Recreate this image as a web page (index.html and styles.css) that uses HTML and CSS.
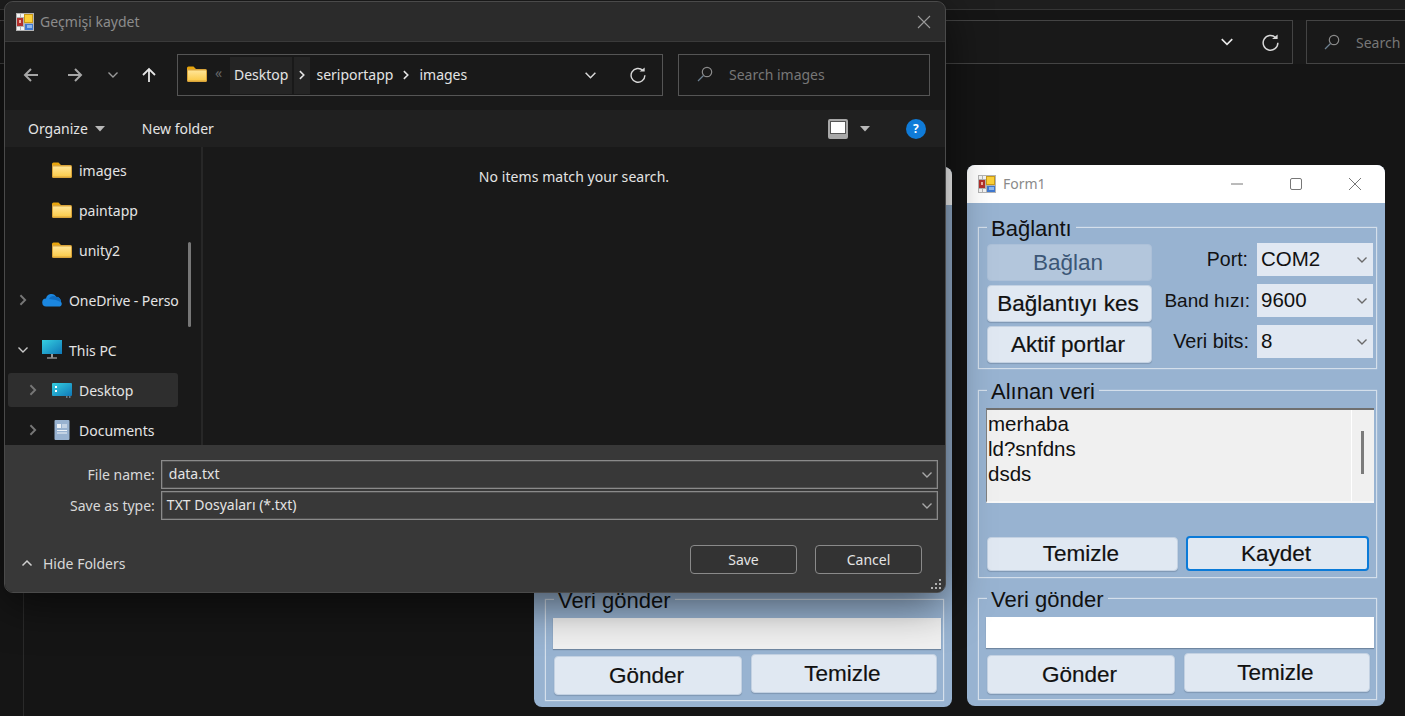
FILE: index.html
```html
<!DOCTYPE html>
<html lang="en">
<head>
    <meta charset="UTF-8">
    <title>Geçmişi kaydet</title>
    <link rel="stylesheet" href="styles.css">
</head>
<body>
    <svg class="defs" width="0" height="0">
        <symbol id="appicon" viewBox="0 0 18 18">
            <rect width="18" height="18" fill="#b4b4b4"/>
            <rect x="1" y="1" width="3" height="3" fill="#f4f4f4"/>
            <rect x="5" y="1" width="3" height="3" fill="#f4f4f4"/>
            <rect x="1" y="14" width="3" height="3" fill="#f4f4f4"/>
            <rect x="5" y="14" width="3" height="3" fill="#f4f4f4"/>
            <rect x="1" y="5" width="6" height="8" fill="#b3302c"/>
            <rect x="3" y="7" width="2" height="3" fill="#f0b0a0"/>
            <rect x="8" y="1" width="9" height="9" fill="#c99a18"/>
            <rect x="9" y="2" width="7" height="7" fill="#fbd038"/>
            <rect x="9" y="11" width="8" height="6" fill="#3f78d0"/>
            <rect x="11" y="12" width="5" height="3" fill="#8fb8ee"/>
        </symbol>
        <symbol id="folder" viewBox="0 0 20 16">
            <path d="M0 2a1.500 1.500 0 0 1 1.500-1.500h5l2.500 2.500h-9z" fill="#e8a50c"/>
            <path d="M0 3h18.500a1.500 1.500 0 0 1 1.500 1.500v10a1.500 1.500 0 0 1-1.500 1.500h-17a1.500 1.500 0 0 1-1.500-1.500z" fill="#d9a43a"/>
            <path d="M1 4.500h18v10h-18z" fill="url(#foldergrad)"/>
        </symbol>
        <linearGradient id="foldergrad" x1="0" y1="0" x2="0" y2="1">
            <stop offset="0" stop-color="#ffe596"/>
            <stop offset="1" stop-color="#fbcb4c"/>
        </linearGradient>
        <linearGradient id="screengrad" x1="0" y1="0" x2="1" y2="1">
            <stop offset="0" stop-color="#35cfe0"/>
            <stop offset="1" stop-color="#0f78b8"/>
        </linearGradient>
        <symbol id="chev" viewBox="0 0 12 12">
            <path d="M1.500 3.500l4.500 4.500 4.500-4.500" fill="none" stroke="currentColor" stroke-width="1.400"/>
        </symbol>
        <symbol id="chevright" viewBox="0 0 10 14">
            <path d="M2 1.500l5.500 5.500-5.500 5.500" fill="none" stroke="currentColor" stroke-width="2.200"/>
        </symbol>
        <symbol id="caret" viewBox="0 0 10 6">
            <path d="M0 0h10l-5 5.500z" fill="currentColor"/>
        </symbol>
        <symbol id="search" viewBox="0 0 16 16">
            <circle cx="10" cy="6" r="4.700" fill="none" stroke="#8a8a8a" stroke-width="1.200"/>
            <path d="M6.500 9.500l-5.500 5.500" stroke="#6c7f90" stroke-width="1.300"/>
        </symbol>
        <symbol id="refresh" viewBox="0 0 16 16">
            <path d="M12.900 3.500a6.900 6.900 0 1 0 2 4.800" fill="none" stroke="#d8d8d8" stroke-width="1.400"/>
            <path d="M9.500 4.600h5.200v-4.200z" fill="#d8d8d8"/>
        </symbol>
    </svg>

    <!-- app behind everything -->
    <div class="backdrop">
        <div class="back-strip"></div>
        <div class="back-bar">
            <div class="back-address">
                <svg class="back-chev"><use href="#chev"/></svg>
                <svg class="back-refresh"><use href="#refresh"/></svg>
            </div>
            <div class="back-search">
                <svg class="search-icon"><use href="#search"/></svg>
                <span>Search</span>
            </div>
        </div>
        <div class="back-rail"></div>
    </div>

    <!-- form hidden behind the dialog -->
    <div class="form-window form-behind">
        <div class="form-title"></div>
        <div class="form-body">
            <div class="group group-send">
                <div class="group-title">Veri gönder</div>
                <div class="send-input"></div>
                <div class="send-row">
                    <button class="btn btn-send">Gönder</button>
                    <button class="btn btn-clear">Temizle</button>
                </div>
            </div>
        </div>
    </div>

    <div class="form-window form-front">
        <div class="form-title">
            <svg class="form-icon"><use href="#appicon"/></svg>
            <span class="form-name">Form1</span>
            <div class="form-controls">
                <svg width="14" height="14" viewBox="0 0 14 14"><path d="M1 7h12" stroke="#777" stroke-width="1"/></svg>
                <svg width="14" height="14" viewBox="0 0 14 14"><rect x="1.500" y="1.500" width="11" height="11" rx="1.500" fill="none" stroke="#777"/></svg>
                <svg width="14" height="14" viewBox="0 0 14 14"><path d="M1 1l12 12M13 1l-12 12" stroke="#777" stroke-width="1"/></svg>
            </div>
        </div>
        <div class="form-body">
            <div class="group group-conn">
                <div class="group-title">Bağlantı</div>
                <div class="conn-buttons">
                    <button class="btn btn-conn btn-disabled">Bağlan</button>
                    <button class="btn btn-conn">Bağlantıyı kes</button>
                    <button class="btn btn-conn">Aktif portlar</button>
                </div>
                <div class="conn-fields">
                    <div class="field field-port">
                        <span class="field-label">Port:</span>
                        <div class="combo">COM2<svg class="combo-chev"><use href="#chev"/></svg></div>
                    </div>
                    <div class="field field-band">
                        <span class="field-label">Band hızı:</span>
                        <div class="combo">9600<svg class="combo-chev"><use href="#chev"/></svg></div>
                    </div>
                    <div class="field field-bits">
                        <span class="field-label">Veri bits:</span>
                        <div class="combo">8<svg class="combo-chev"><use href="#chev"/></svg></div>
                    </div>
                </div>
            </div>

            <div class="group group-recv">
                <div class="group-title">Alınan veri</div>
                <div class="recv-box">
                    <div class="recv-text">merhaba<br>ld?snfdns<br>dsds</div>
                    <div class="recv-scroll"><div class="recv-thumb"></div></div>
                </div>
                <div class="recv-row">
                    <button class="btn btn-recv-clear">Temizle</button>
                    <button class="btn btn-save">Kaydet</button>
                </div>
            </div>

            <div class="group group-send">
                <div class="group-title">Veri gönder</div>
                <div class="send-input"></div>
                <div class="send-row">
                    <button class="btn btn-send">Gönder</button>
                    <button class="btn btn-clear">Temizle</button>
                </div>
            </div>
        </div>
    </div>

    <div class="dialog">
        <div class="dlg-title">
            <svg class="dlg-icon"><use href="#appicon"/></svg>
            <span class="dlg-name">Geçmişi kaydet</span>
            <svg class="dlg-close" viewBox="0 0 14 14"><path d="M1 1l12 12M13 1l-12 12" stroke="#9a9a9a" stroke-width="1.100"/></svg>
        </div>

        <div class="dlg-nav">
            <div class="nav-buttons">
                <svg class="nav-arrow" viewBox="0 0 16 16"><path d="M15 8h-13M8 2l-6 6 6 6" fill="none" stroke="#a6a6a6" stroke-width="2"/></svg>
                <svg class="nav-arrow nav-forward" viewBox="0 0 16 16"><path d="M1 8h13M8 2l6 6-6 6" fill="none" stroke="#a6a6a6" stroke-width="2"/></svg>
                <svg class="nav-drop"><use href="#chev"/></svg>
                <svg class="nav-arrow nav-up" viewBox="0 0 16 16"><path d="M8 15v-13M2 8l6-6 6 6" fill="none" stroke="#e6e6e6" stroke-width="1.800"/></svg>
            </div>
            <div class="address">
                <svg class="addr-folder"><use href="#folder"/></svg>
                <span class="addr-more">«</span>
                <span class="crumb crumb-hover">Desktop</span>
                <span class="crumb-sep crumb-hover"><svg><use href="#chevright"/></svg></span>
                <span class="crumb crumb-plain">seriportapp</span>
                <span class="crumb-sep"><svg><use href="#chevright"/></svg></span>
                <span class="crumb crumb-plain">images</span>
                <svg class="addr-chev"><use href="#chev"/></svg>
                <svg class="addr-refresh"><use href="#refresh"/></svg>
            </div>
            <div class="search-box">
                <svg class="search-icon"><use href="#search"/></svg>
                <span>Search images</span>
            </div>
        </div>

        <div class="dlg-tools">
            <span class="tool tool-organize">Organize<svg class="tool-caret"><use href="#caret"/></svg></span>
            <span class="tool tool-new">New folder</span>
            <span class="view-icon"></span>
            <svg class="tool-caret view-caret"><use href="#caret"/></svg>
            <span class="help-icon">?</span>
        </div>

        <div class="dlg-body">
            <div class="sidebar">
                <div class="tree-row lvl1"><span class="tree-chev"></span><svg class="tree-icon"><use href="#folder"/></svg><span>images</span></div>
                <div class="tree-row lvl1"><span class="tree-chev"></span><svg class="tree-icon"><use href="#folder"/></svg><span>paintapp</span></div>
                <div class="tree-row lvl1 tree-last"><span class="tree-chev"></span><svg class="tree-icon"><use href="#folder"/></svg><span>unity2</span></div>
                <div class="tree-row lvl0 tree-last">
                    <svg class="tree-chev"><use href="#chevright"/></svg>
                    <svg class="tree-icon" viewBox="0 0 20 16"><path d="M4.500 14.500a4 4 0 0 1-.5-8 5.500 5.500 0 0 1 10.300-1.500 4.500 4.500 0 0 1 4.700 5 2.800 2.800 0 0 1-1 4.500z" fill="#1b87e0"/><path d="M7 7a5 5 0 0 1 7-2.200 4.500 4.500 0 0 1 4.800 5.200l-5-2z" fill="#0f6cc0"/></svg>
                    <span class="tree-long">OneDrive - Perso</span>
                </div>
                <div class="tree-row lvl0">
                    <svg class="tree-chev tree-open"><use href="#chev"/></svg>
                    <svg class="tree-icon tree-icon-tall" viewBox="0 0 20 20"><rect x="0" y="0" width="20" height="14" fill="url(#screengrad)"/><path d="M9 14h2v3.500h-2z" fill="#9a9a9a"/><path d="M5 17.500h10v1h-10z" fill="#c8c8c8"/></svg>
                    <span>This PC</span>
                </div>
                <div class="tree-row lvl1 tree-selected">
                    <svg class="tree-chev"><use href="#chevright"/></svg>
                    <svg class="tree-icon" viewBox="0 0 20 16"><rect y="1" width="20" height="13" rx="1" fill="url(#screengrad)"/><rect x="3" y="4" width="2" height="2" fill="#fff"/><rect x="3" y="8" width="2" height="2" fill="#fff"/><rect x="14" y="14.500" width="1.500" height="1" fill="#a8c8e0"/><rect x="17" y="14.500" width="1.500" height="1" fill="#a8c8e0"/></svg>
                    <span>Desktop</span>
                </div>
                <div class="tree-row lvl1">
                    <svg class="tree-chev"><use href="#chevright"/></svg>
                    <svg class="tree-icon tree-icon-tall" viewBox="0 0 20 20"><rect x="2.500" y="0" width="15" height="20" rx="1" fill="#98b2d0"/><rect x="5" y="4" width="4" height="4" fill="#eef3f8"/><path d="M10 5h5M10 7h5M5 10.500h10M5 13h10" stroke="#eef3f8" stroke-width="1"/></svg>
                    <span>Documents</span>
                </div>
                <div class="side-thumb"></div>
            </div>
            <div class="main-list">No items match your search.</div>
        </div>

        <div class="dlg-footer">
            <div class="file-row">
                <label class="file-label">File name:</label>
                <div class="file-box file-name">data.txt<svg class="file-chev"><use href="#chev"/></svg></div>
            </div>
            <div class="file-row">
                <label class="file-label">Save as type:</label>
                <div class="file-box file-type">TXT Dosyaları (*.txt)<svg class="file-chev"><use href="#chev"/></svg></div>
            </div>
            <div class="footer-actions">
                <svg class="hide-chev" viewBox="0 0 12 12"><path d="M1.500 8.500l4.500-4.500 4.500 4.500" fill="none" stroke="#d0d0d0" stroke-width="1.500"/></svg>
                <span class="hide-folders">Hide Folders</span>
                <button class="dlg-btn dlg-save">Save</button>
                <button class="dlg-btn">Cancel</button>
            </div>
            <svg class="grip" width="11" height="11" viewBox="0 0 11 11"><path d="M8 0h2v2h-2zM4 4h2v2h-2zM8 4h2v2h-2zM0 8h2v2h-2zM4 8h2v2h-2zM8 8h2v2h-2z" fill="#b0b0b0"/></svg>
        </div>
    </div>
</body>
</html>
```

FILE: styles.css
```css
* {
    box-sizing: border-box;
}
html, body {
    margin: 0;
    padding: 0;
}
body {
    position: relative;
    width: 1405px;
    height: 716px;
    overflow: hidden;
    background-color: #151515;
    font-family: "Noto Sans", sans-serif;
    font-size: 14px;
    color: #e4e4e4;
}
button {
    font-family: inherit;
    cursor: default;
}
.defs {
    position: absolute;
}

/* background app */
.backdrop {
    position: absolute;
    inset: 0;
}
.back-strip {
    height: 10px;
    background-color: #1e1e1e;
    border-bottom: 1px solid #363636;
}
.back-bar {
    display: flex;
    margin-top: 10px;
    height: 44px;
    background-color: #191919;
}
.back-address {
    display: flex;
    align-items: center;
    justify-content: flex-end;
    width: 1295px;
    margin-left: -2px;
    border: 1px solid #444;
    padding-right: 13px;
}
.back-chev {
    width: 14px;
    height: 14px;
    color: #e8e8e8;
    margin-right: 28px;
}
.back-refresh {
    width: 17px;
    height: 17px;
}
.back-search {
    display: flex;
    align-items: center;
    flex: 1;
    margin-left: 13px;
    margin-right: -10px;
    padding-left: 17px;
    border: 1px solid #444;
    color: #777;
}
.back-rail {
    position: absolute;
    left: 23px;
    top: 590px;
    bottom: 0;
    width: 1px;
    background-color: #2a2a2a;
}

/* winforms windows */
.form-window {
    position: absolute;
    width: 418px;
    border-radius: 8px;
    overflow: hidden;
    display: flex;
    flex-direction: column;
    font-family: "Liberation Sans", Arial, sans-serif;
    font-size: 20.500px;
    color: #111;
    background-color: #98b3d1;
}
.form-front {
    left: 967px;
    top: 165px;
    height: 541px;
}
.form-behind {
    left: 534px;
    top: 167px;
    height: 540px;
}
.form-behind .form-body {
    justify-content: flex-end;
}
.form-behind .send-input {
    background-color: #f0f0f0;
}
.form-title {
    display: flex;
    align-items: center;
    height: 38px;
    flex: none;
    padding-left: 11px;
    background-color: #fff;
}
.form-icon {
    width: 18px;
    height: 18px;
}
.form-name {
    margin-left: 7px;
    padding-bottom: 2px;
    font-family: "Noto Sans", sans-serif;
    font-size: 14px;
    color: #8a8a8a;
}
.form-controls {
    display: flex;
    gap: 45px;
    margin-left: auto;
    margin-right: 23px;
}
.form-body {
    flex: 1;
    display: flex;
    flex-direction: column;
    padding: 24px 8px 6px 11px;
}
.group {
    position: relative;
    border: 1px solid #d4dfeb;
    box-shadow: 0 0 1px #d4dfeb;
}
.group-title {
    position: absolute;
    left: 8px;
    top: -12px;
    padding: 0 4px;
    font-size: 22px;
    line-height: 26px;
    background-color: #98b3d1;
}
.group-conn {
    display: flex;
    justify-content: space-between;
    height: 142px;
    padding: 16px 3px 0 8px;
}
.group-recv {
    margin-top: 21px;
    height: 188px;
    padding: 17px 2px 0 7px;
}
.group-send {
    margin-top: 20px;
    height: 102px;
    padding: 18px 2px 0 7px;
}
.btn {
    display: block;
    padding: 0 3px 0 0;
    font-size: 22.500px;
    -webkit-text-stroke: 0.2px #111;
    color: #111;
    background-color: #e0e8f2;
    border: 1px solid #c3d1e2;
    border-radius: 4px;
    box-shadow: 0 1px 1px #7f97b3;
}
.conn-buttons {
    display: flex;
    flex-direction: column;
    gap: 4px;
    width: 165px;
}
.btn-conn {
    height: 37px;
}
.btn-disabled {
    background-color: #b3c6dc;
    border-color: #acc0d8;
    color: #3c5676;
    -webkit-text-stroke: 0;
    box-shadow: none;
}
.conn-fields {
    display: flex;
    flex-direction: column;
    gap: 8px;
    margin-top: -1px;
}
.field {
    display: flex;
    align-items: center;
    justify-content: flex-end;
}
.field-label {
    margin-right: 9px;
    font-size: 19.500px;
}
.field-band .field-label {
    margin-right: 7px;
    font-size: 19px;
}
.field-bits .field-label {
    margin-right: 8px;
    font-size: 19.800px;
}
.combo {
    position: relative;
    display: flex;
    align-items: center;
    width: 116px;
    height: 33px;
    padding: 0 0 1px 4px;
    background-color: #e1e8f2;
}
.combo-chev {
    position: absolute;
    right: 5px;
    top: 11px;
    width: 12px;
    height: 12px;
    color: #6a6a6a;
}
.recv-box {
    display: flex;
    width: 388px;
    height: 95px;
    background-color: #f0f0f0;
    border-top: 2px solid #707070;
    border-left: 1px solid #808080;
    border-bottom: 2px solid #f8f8f8;
}
.recv-text {
    flex: 1;
    padding: 1px 0 0 1px;
    line-height: 25px;
}
.recv-scroll {
    width: 23px;
    border-left: 1px solid #fff;
    padding: 21px 0 0 9px;
}
.recv-thumb {
    width: 3px;
    height: 43px;
    background-color: #7b7b7b;
}
.recv-row {
    display: flex;
    margin-top: 33px;
    margin-left: 1px;
}
.btn-recv-clear {
    width: 191px;
    height: 34px;
    margin-top: 1px;
}
.btn-save {
    width: 183px;
    height: 35px;
    margin-left: 8px;
    border: 2px solid #0a7ad8;
    box-shadow: none;
}
.send-input {
    width: 388px;
    height: 31px;
    background-color: #fff;
    box-shadow: 0 1px 1px #6f86a0;
}
.send-row {
    display: flex;
    align-items: flex-start;
    margin-top: 5px;
    margin-left: 1px;
}
.btn-send {
    width: 188px;
    height: 39px;
    margin-top: 2px;
}
.btn-clear {
    width: 186px;
    height: 39px;
    margin-left: 9px;
}

/* save dialog */
.dialog {
    position: absolute;
    left: 5px;
    top: 2px;
    width: 940px;
    height: 590px;
    display: flex;
    flex-direction: column;
    border-radius: 8px;
    overflow: hidden;
    outline: 1px solid #4a4a4a;
    box-shadow: 0 10px 45px rgba(0, 0, 0, 0.6);
    background-color: #191919;
}
.dlg-title {
    display: flex;
    align-items: center;
    flex: none;
    height: 40px;
    padding: 0 14px 0 11px;
    background-color: #2b2b2b;
    border-bottom: 1px solid #3a3a3a;
}
.dlg-icon {
    width: 18px;
    height: 18px;
}
.dlg-name {
    margin-left: 6px;
    color: #8c8c8c;
}
.dlg-close {
    width: 14px;
    height: 14px;
    margin-left: auto;
}
.dlg-nav {
    display: flex;
    align-items: center;
    flex: none;
    height: 68px;
    padding-bottom: 2px;
}
.nav-buttons {
    display: flex;
    align-items: center;
    width: 172px;
    padding-left: 18px;
}
.nav-arrow {
    width: 16px;
    height: 16px;
}
.nav-forward {
    margin-left: 28px;
}
.nav-drop {
    width: 12px;
    height: 12px;
    margin-left: 24px;
    color: #9a9a9a;
}
.nav-up {
    margin-left: 22px;
}
.address {
    display: flex;
    align-items: center;
    width: 486px;
    height: 42px;
    border: 1px solid #555;
    padding-left: 9px;
}
.addr-folder {
    width: 20px;
    height: 16px;
    margin-bottom: 3px;
}
.addr-more {
    width: 23px;
    margin-top: -6px;
    padding-left: 8px;
    color: #666;
}
.crumb {
    display: flex;
    align-items: center;
    height: 37px;
    padding: 0 4px 2px;
}
.crumb-hover {
    background-color: #242424;
}
.crumb-sep {
    display: flex;
    align-items: center;
    justify-content: center;
    width: 16px;
    height: 37px;
    margin: 0 2px;
}
.crumb-sep svg {
    width: 8px;
    height: 10px;
    color: #e4e4e4;
}
.crumb-plain + .crumb-sep {
    margin: 0 1px;
}
.addr-chev {
    width: 13px;
    height: 13px;
    margin-left: auto;
    color: #d8d8d8;
}
.addr-refresh {
    width: 16px;
    height: 16px;
    margin: 0 16px 0 33px;
}
.search-box {
    display: flex;
    align-items: center;
    width: 252px;
    height: 42px;
    margin-left: 15px;
    padding-left: 18px;
    padding-bottom: 2px;
    border: 1px solid #555;
    color: #777;
}
.search-icon {
    width: 16px;
    height: 16px;
    margin-right: 16px;
    flex: none;
}
.dlg-tools {
    display: flex;
    align-items: center;
    flex: none;
    height: 37px;
    padding-left: 23px;
    background-color: #202020;
}
.tool-organize {
    display: flex;
    align-items: center;
}
.tool-caret {
    width: 10px;
    height: 6px;
    margin-left: 7px;
    color: #b8b8b8;
}
.tool-new {
    margin-left: 37px;
}
.view-icon {
    width: 20px;
    height: 20px;
    margin-left: 614px;
    background-color: #fff;
    border: 2px solid #a8a8a8;
    border-bottom-width: 5px;
    border-radius: 2px;
    box-shadow: inset 0 0 0 1px #555;
}
.view-caret {
    margin-left: 12px;
}
.help-icon {
    display: flex;
    align-items: center;
    justify-content: center;
    width: 20px;
    height: 20px;
    margin-left: 36px;
    border-radius: 50%;
    background-color: #0f7bd8;
    color: #fff;
    font-size: 12px;
    font-weight: bold;
}
.dlg-body {
    display: flex;
    flex: 1;
    min-height: 0;
}
.sidebar {
    position: relative;
    width: 198px;
    flex: none;
    overflow: hidden;
    padding: 6px 0 0 3px;
    border-right: 2px solid #272727;
}
.tree-row {
    display: flex;
    align-items: center;
    width: 170px;
    height: 34px;
    margin-bottom: 6px;
    white-space: nowrap;
}
.tree-last {
    margin-bottom: 16px;
}
.tree-long {
    letter-spacing: -0.1px;
}
.lvl0 {
    padding-left: 10px;
}
.lvl1 {
    padding-left: 20px;
}
.tree-selected {
    background-color: #2e2e2e;
    border-radius: 3px;
}
.tree-chev {
    display: block;
    flex: none;
    width: 10px;
    height: 12px;
    margin-right: 14px;
    color: #777;
}
.tree-open {
    color: #c8c8c8;
    width: 12px;
    margin-left: -1px;
    margin-right: 13px;
}
.tree-icon {
    flex: none;
    width: 20px;
    height: 16px;
    margin-right: 7px;
}
.tree-icon-tall {
    height: 20px;
}
.side-thumb {
    position: absolute;
    left: 183px;
    top: 95px;
    width: 3px;
    height: 85px;
    background-color: #777;
    border-radius: 2px;
}
.main-list {
    flex: 1;
    padding-top: 20px;
    letter-spacing: 0.07px;
    text-align: center;
}
.dlg-footer {
    position: relative;
    flex: none;
    height: 147px;
    padding: 15px 7px 0 0;
    background-color: #383838;
}
.file-row {
    display: flex;
    align-items: center;
    margin-bottom: 2px;
}
.file-label {
    width: 150px;
    padding-bottom: 1px;
    text-align: right;
    color: #d8d8d8;
}
.file-box {
    position: relative;
    display: flex;
    align-items: center;
    width: 778px;
    height: 29px;
    margin-left: 6px;
    padding-bottom: 2px;
    border: 1px solid #8a8a8a;
    box-shadow: inset 0 0 0 0.500px #666;
}
.file-name {
    padding-left: 7px;
}
.file-type {
    padding-left: 5px;
}
.file-chev {
    position: absolute;
    right: 4px;
    top: 8px;
    width: 12px;
    height: 12px;
    color: #a8a8a8;
}
.footer-actions {
    display: flex;
    align-items: center;
    margin-top: 25px;
    padding-left: 16px;
    padding-right: 16px;
}
.hide-chev {
    width: 12px;
    height: 12px;
    margin-top: 6px;
}
.hide-folders {
    margin-left: 10px;
    margin-top: 7px;
    color: #d8d8d8;
}
.dlg-btn {
    width: 107px;
    height: 29px;
    margin-left: 18px;
    padding: 0;
    font-size: 14px;
    color: #e4e4e4;
    background-color: #333;
    border: 1px solid #8a8a8a;
    border-radius: 4px;
}
.dlg-save {
    margin-left: auto;
}
.grip {
    position: absolute;
    right: 3px;
    bottom: 2px;
}
```
